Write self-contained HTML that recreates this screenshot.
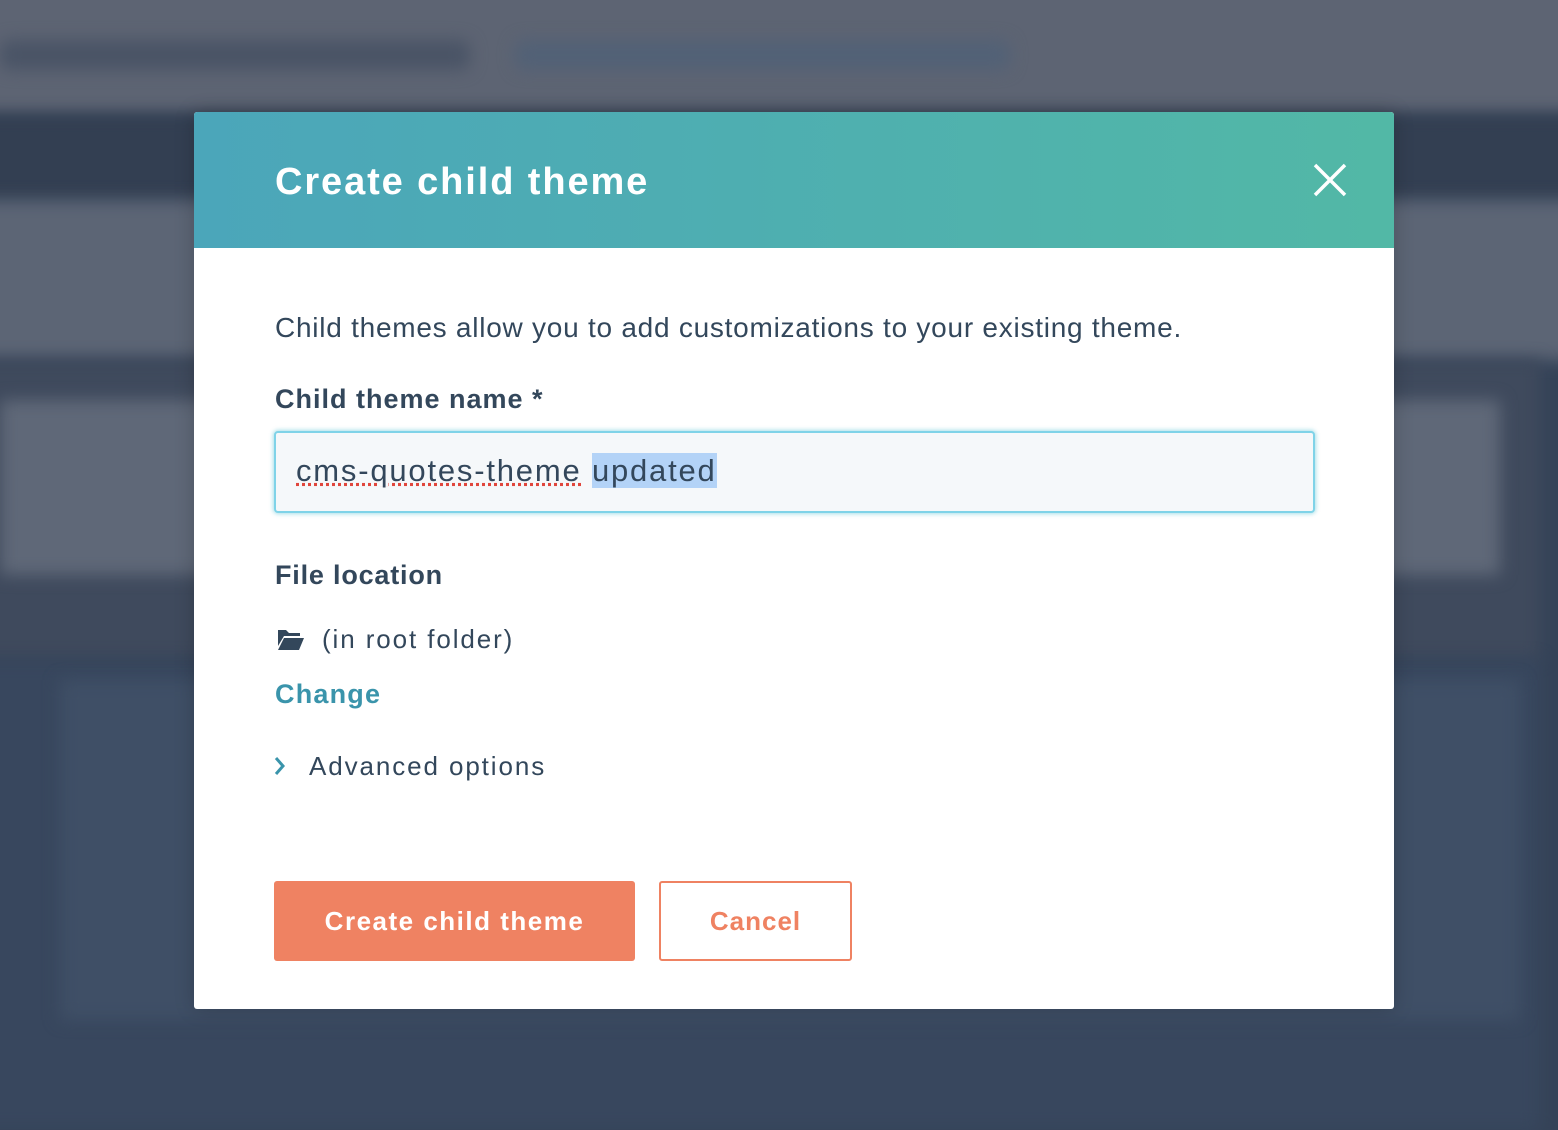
<!DOCTYPE html>
<html><head><meta charset="utf-8"><style>
*{margin:0;padding:0;box-sizing:border-box}
body{width:1558px;height:1110px;overflow:hidden;position:relative;background:#354358;font-family:"Liberation Sans",sans-serif;color:#33475b}
.bg{position:absolute;filter:blur(8px)}
.modal{position:absolute;left:194px;top:112px;width:1200px;height:897px;background:#fff;border-radius:3px;overflow:hidden;box-shadow:0 0 20px rgba(0,0,0,.2)}
.hdr{height:136px;background:linear-gradient(90deg,#4ba6ba,#52b8a6);position:relative}
.hdr h1{position:absolute;left:81px;top:49px;font-size:38px;font-weight:bold;color:#fff;letter-spacing:1.9px}
.t{position:absolute;left:81px}
</style></head><body>
<div class="bg" style="left:-20px;top:-20px;width:1600px;height:135px;background:#5d6473"></div>
<div class="bg" style="left:0;top:40px;width:470px;height:30px;background:#4a5466;border-radius:10px"></div>
<div class="bg" style="left:515px;top:40px;width:495px;height:30px;background:#526176;border-radius:10px"></div>
<div class="bg" style="left:-20px;top:115px;width:1600px;height:85px;background:#333f52"></div>
<div class="bg" style="left:-20px;top:200px;width:1600px;height:160px;background:#5c6575"></div>
<div class="bg" style="left:-20px;top:360px;width:1560px;height:300px;background:#3f4a5d"></div>
<div class="bg" style="left:0;top:400px;width:1500px;height:175px;background:#5f6878"></div>
<div class="bg" style="left:-20px;top:660px;width:1560px;height:470px;background:#38475e"></div>
<div class="bg" style="left:60px;top:680px;width:1460px;height:340px;background:#3f4f66"></div>
<div class="modal">
 <div class="hdr"><h1>Create child theme</h1>
  <svg style="position:absolute;left:1119px;top:51px" width="34" height="34" viewBox="0 0 34 34"><path d="M2 2L32 32M32 2L2 32" stroke="#fff" stroke-width="3.5" fill="none"/></svg>
 </div>
 <div class="t" style="top:200px;font-size:28px;letter-spacing:0.75px">Child themes allow you to add customizations to your existing theme.</div>
 <div class="t" style="top:272px;font-size:27px;font-weight:bold;letter-spacing:1px">Child theme name *</div>
 <div style="position:absolute;left:80px;top:319px;width:1041px;height:82px;border:2px solid #7fd3e8;border-radius:4px;background:#f5f8fa;box-shadow:0 0 4px 1px rgba(0,164,189,.35)"></div>
 <div class="t" style="left:102px;top:341px;font-size:31px;letter-spacing:1.8px"><span style="text-decoration:underline dotted #e0463c">cms-quotes-theme</span> <span style="background:#b3d3f7">updated</span></div>
 <div class="t" style="top:448px;font-size:27px;font-weight:bold;letter-spacing:0.8px">File location</div>
 <svg style="position:absolute;left:83px;top:515px" width="28" height="24" viewBox="0 0 28 24"><path d="M1 3h8l3 3h11v3H7L1 19z" fill="#33475b"/><path d="M7 11h20l-5 12H1z" fill="#33475b"/></svg>
 <div class="t" style="left:128px;top:512px;font-size:26px;letter-spacing:1.9px">(in root folder)</div>
 <div class="t" style="top:567px;font-size:27px;font-weight:bold;color:#3a94ab;letter-spacing:1.2px">Change</div>
 <svg style="position:absolute;left:80px;top:644px" width="12" height="20" viewBox="0 0 12 20"><path d="M2 2l7 8-7 8" stroke="#3a94ab" stroke-width="3" fill="none"/></svg>
 <div class="t" style="left:115px;top:639px;font-size:26px;letter-spacing:1.9px">Advanced options</div>
 <div style="position:absolute;left:80px;top:769px;width:361px;height:80px;background:#ef8262;border-radius:3px;color:#fff;font-size:26px;font-weight:bold;text-align:center;line-height:80px;letter-spacing:1.5px">Create child theme</div>
 <div style="position:absolute;left:465px;top:769px;width:193px;height:80px;border:2px solid #ef8262;border-radius:3px;color:#ef8262;font-size:26px;font-weight:bold;text-align:center;line-height:76px;letter-spacing:1px">Cancel</div>
</div>
</body></html>
